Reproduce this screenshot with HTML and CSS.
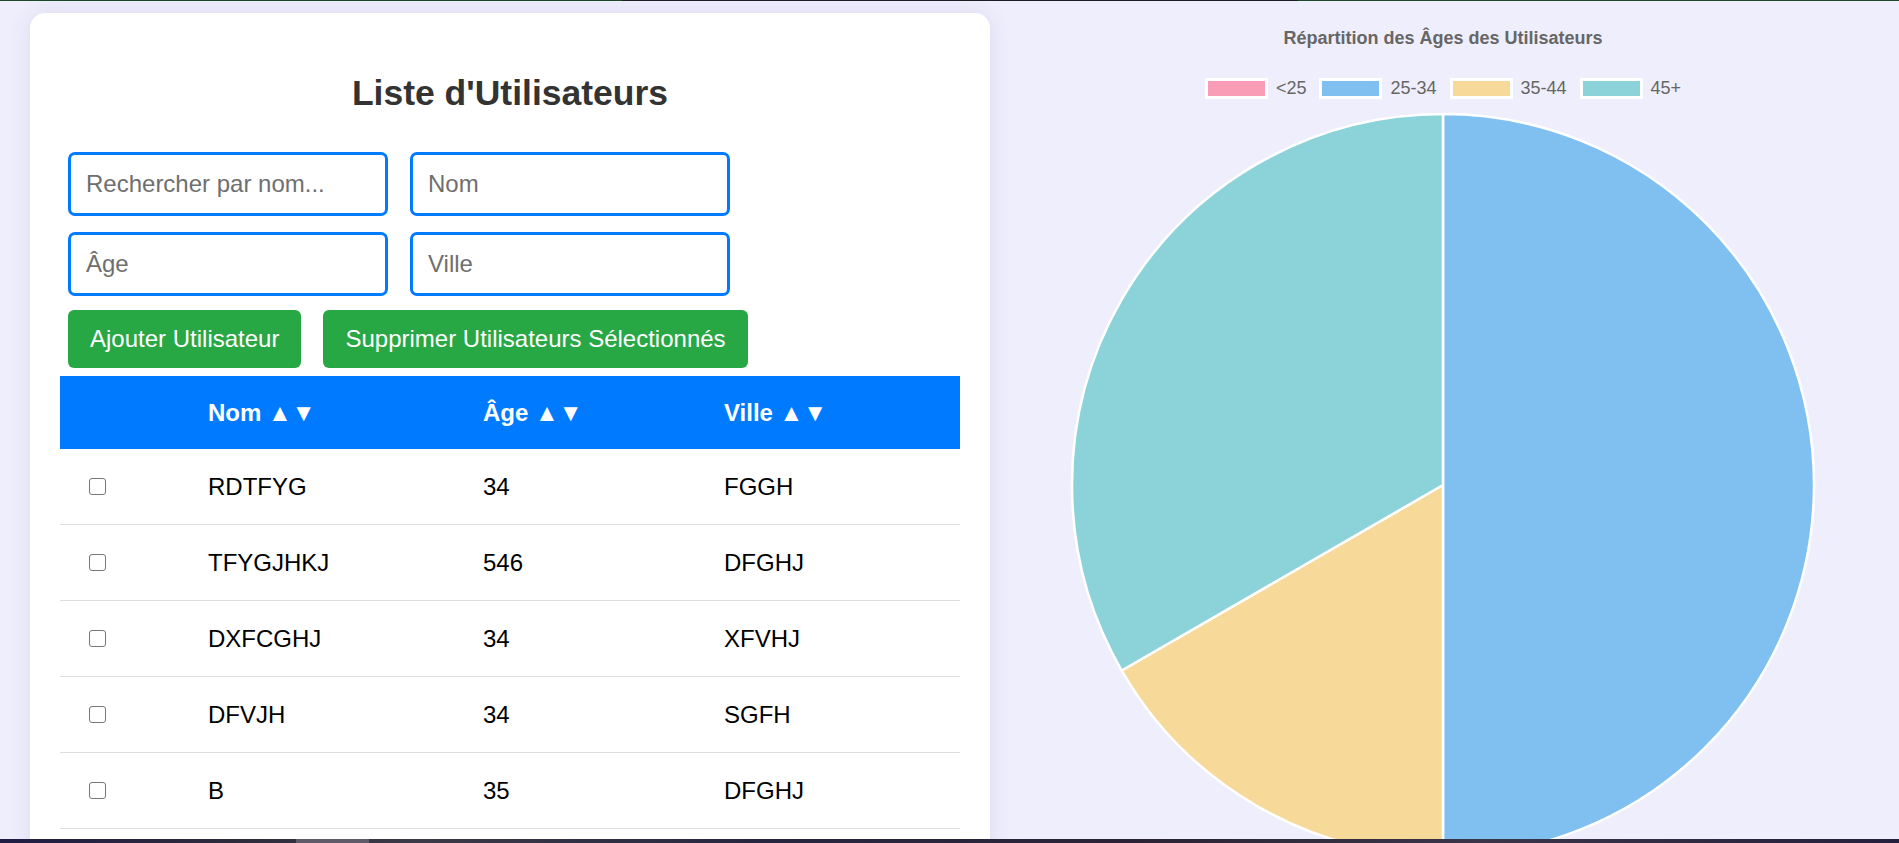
FILE: index.html
```html
<!DOCTYPE html>
<html lang="fr">
<head>
<meta charset="utf-8">
<title>Liste d'Utilisateurs</title>
<link rel="stylesheet" href="styles.css">
</head>
<body>
<div class="topline"></div>
<div class="layout">
  <section class="card">
    <h1 class="title">Liste d'Utilisateurs</h1>
    <div class="form">
      <div class="form-row">
        <input class="field" type="text" placeholder="Rechercher par nom...">
        <input class="field" type="text" placeholder="Nom">
      </div>
      <div class="form-row">
        <input class="field" type="text" placeholder="Âge">
        <input class="field" type="text" placeholder="Ville">
      </div>
      <div class="actions">
        <button class="btn">Ajouter Utilisateur</button>
        <button class="btn">Supprimer Utilisateurs Sélectionnés</button>
      </div>
    </div>
    <table class="users">
      <colgroup>
        <col class="c-check"><col class="c-name"><col class="c-age"><col class="c-city">
      </colgroup>
      <thead>
        <tr><th></th><th>Nom <span class="arrows">▲▼</span></th><th>Âge <span class="arrows">▲▼</span></th><th>Ville <span class="arrows">▲▼</span></th></tr>
      </thead>
      <tbody>
        <tr><td><input class="check" type="checkbox"></td><td>RDTFYG</td><td>34</td><td>FGGH</td></tr>
        <tr><td><input class="check" type="checkbox"></td><td>TFYGJHKJ</td><td>546</td><td>DFGHJ</td></tr>
        <tr><td><input class="check" type="checkbox"></td><td>DXFCGHJ</td><td>34</td><td>XFVHJ</td></tr>
        <tr><td><input class="check" type="checkbox"></td><td>DFVJH</td><td>34</td><td>SGFH</td></tr>
        <tr><td><input class="check" type="checkbox"></td><td>B</td><td>35</td><td>DFGHJ</td></tr>
      </tbody>
    </table>
  </section>
  <section class="chart">
    <div class="chart-title">Répartition des Âges des Utilisateurs</div>
    <div class="legend">
      <span class="swatch sw-pink"></span><span class="legend-label">&lt;25</span>
      <span class="swatch sw-blue"></span><span class="legend-label">25-34</span>
      <span class="swatch sw-yellow"></span><span class="legend-label">35-44</span>
      <span class="swatch sw-teal"></span><span class="legend-label last">45+</span>
    </div>
    <svg class="pie" width="746" height="746" viewBox="0 0 746 746">
      <path class="slice-blue" d="M373 373 L373 2 A371 371 0 0 1 373 744 Z"/>
      <path class="slice-yellow" d="M373 373 L373 744 A371 371 0 0 1 51.7 558.5 Z"/>
      <path class="slice-teal" d="M373 373 L51.7 558.5 A371 371 0 0 1 373 2 Z"/>
    </svg>
  </section>
</div>
<div class="taskbar"><div class="taskbar-thumb"></div></div>
</body>
</html>
```
FILE: styles.css
```css
html, body {
  margin: 0;
  padding: 0;
  overflow: hidden;
}
body {
  background: #efeefc;
  font-family: "Liberation Sans", Arial, sans-serif;
  color: #000;
}
.topline {
  height: 1px;
  background: linear-gradient(90deg, #1b4a2a 0, #1b4a2a 622px, #1c1c24 622px, #1c1c24 1298px, #1b4a2a 1298px);
}
.layout {
  display: flex;
  padding-left: 30px;
}
.card {
  flex: none;
  width: 960px;
  box-sizing: border-box;
  margin-top: 12px;
  padding: 0 30px 30px;
  background: #fff;
  border-radius: 15px;
  box-shadow: 0 0 22px rgba(60, 50, 140, 0.10);
}
.title {
  margin: 0;
  padding-top: 60px;
  font-size: 35.5px;
  line-height: 41px;
  font-weight: bold;
  color: #333;
  text-align: center;
}
.form {
  padding: 38px 8px 0;
}
.form-row {
  display: flex;
  gap: 22px;
  margin-bottom: 16px;
}
.form-row + .form-row {
  margin-bottom: 14px;
}
.field {
  width: 320px;
  height: 64px;
  box-sizing: border-box;
  border: 3px solid #007bff;
  border-radius: 7px;
  padding: 0 15px;
  font-family: "Liberation Sans", Arial, sans-serif;
  font-size: 24px;
  color: #333;
  background: #fff;
  outline: none;
}
.field::placeholder {
  color: #6f6f6f;
}
.actions {
  display: flex;
  gap: 22px;
}
.btn {
  height: 58px;
  padding: 0 22px;
  border: none;
  border-radius: 6px;
  background: #28a745;
  color: #fff;
  font-family: "Liberation Sans", Arial, sans-serif;
  font-size: 24px;
}
.users {
  width: 900px;
  margin-top: 8px;
  border-collapse: separate;
  border-spacing: 0;
  table-layout: fixed;
  font-size: 24px;
}
.c-check { width: 124px; }
.c-name { width: 275px; }
.c-age { width: 241px; }
.c-city { width: 260px; }
.users th {
  height: 73px;
  padding: 0 0 0 24px;
  background: #007bff;
  color: #fff;
  font-weight: bold;
  text-align: left;
  box-sizing: border-box;
}
.users td {
  height: 76px;
  padding: 0 0 0 24px;
  border-bottom: 1px solid #ddd;
  box-sizing: border-box;
  vertical-align: middle;
}
.check {
  appearance: none;
  -webkit-appearance: none;
  display: block;
  width: 17px;
  height: 17px;
  box-sizing: border-box;
  margin: 0 0 0 5px;
  border: 1.5px solid #777;
  border-radius: 3px;
  background: #fff;
}
.chart {
  flex: 1;
  display: flex;
  flex-direction: column;
  align-items: center;
  padding-top: 26px;
  padding-right: 3px;
}
.chart-title {
  font-size: 18px;
  line-height: 22px;
  font-weight: bold;
  color: #666;
}
.legend {
  display: flex;
  align-items: center;
  margin-top: 29px;
  height: 21px;
}
.swatch {
  width: 63px;
  height: 21px;
  box-sizing: border-box;
  border: 3px solid #fff;
}
.sw-pink { background: #f89db5; }
.sw-blue { background: #7fc0f1; }
.sw-yellow { background: #f7da9a; }
.sw-teal { background: #8cd3d9; }
.legend-label {
  margin: 0 13px 0 8px;
  font-size: 18px;
  line-height: 21px;
  color: #666;
}
.legend-label.last {
  margin-right: 0;
}
.pie {
  display: block;
  flex: none;
  margin-top: 13px;
}
.pie path {
  stroke: #fff;
  stroke-width: 2.5;
  stroke-linejoin: round;
}
.slice-blue { fill: #7fc0f1; }
.slice-yellow { fill: #f7da9a; }
.slice-teal { fill: #8cd3d9; }
.taskbar {
  position: fixed;
  left: 0;
  right: 0;
  bottom: 0;
  height: 4px;
  background: linear-gradient(90deg, #1f1c44 0%, #2c2b3c 12%, #3a3a48 22%, #262640 40%, #2a2336 60%, #3a3548 78%, #231f3d 100%);
}
.taskbar-thumb {
  position: absolute;
  left: 296px;
  top: 0;
  width: 73px;
  height: 4px;
  background: #5f5b69;
}
```
